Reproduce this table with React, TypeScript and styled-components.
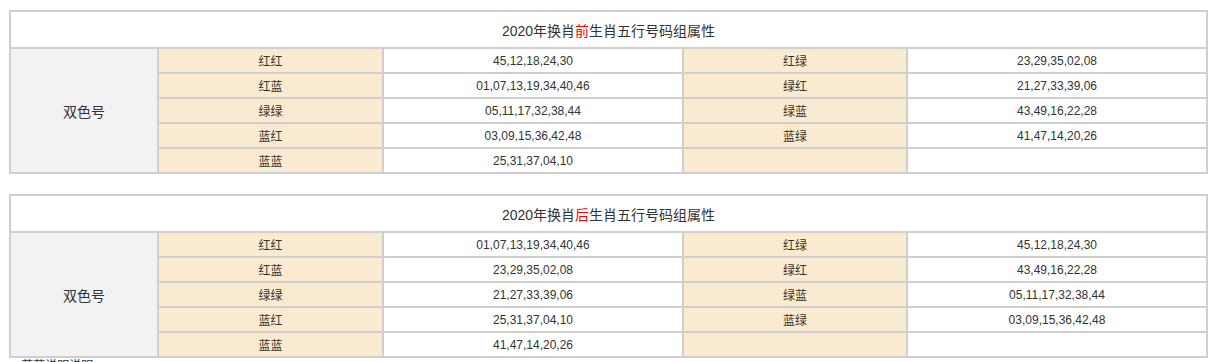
import React from 'react'
import styled, { createGlobalStyle } from 'styled-components'

const GlobalStyle = createGlobalStyle`
  body {
    margin: 0;
    background: #fff;
    color: #333;
    font-family: "Liberation Sans", "Noto Sans CJK SC", sans-serif;
  }
`

const Page = styled.div`
  padding: 10px 9px 0;
  display: flex;
  flex-direction: column;
  gap: 20px;
`

const Grid = styled.div`
  display: grid;
  grid-template-columns: 146px 223px 298px 222px 298px;
  grid-template-rows: 35px repeat(5, 23px);
  gap: 2px;
  padding: 2px;
  background: #cfcfcf;
  width: 1199px;
  box-sizing: border-box;
`

const Title = styled.div`
  grid-column: 1 / -1;
  background: #fff;
  display: flex;
  align-items: center;
  justify-content: center;
  font-size: 14px;
  color: #333;
`

const Hot = styled.span`
  color: #f00;
`

const Side = styled.div`
  grid-row: 2 / span 5;
  background: #f2f2f2;
  display: flex;
  align-items: center;
  justify-content: center;
  font-size: 14px;
  color: #333;
`

const Cell = styled.div<{ $label?: boolean }>`
  background: ${(p) => (p.$label ? '#faebd0' : '#fff')};
  display: flex;
  align-items: center;
  justify-content: center;
  font-size: 12px;
  color: #333;
`

const Note = styled.div`
  font-size: 12px;
  color: #333;
  margin: -20px 0 0 3px;
  line-height: 14px;
  padding-top: 1px;
`

type Row = [string, string, string, string]

const before: Row[] = [
  ['红红', '45,12,18,24,30', '红绿', '23,29,35,02,08'],
  ['红蓝', '01,07,13,19,34,40,46', '绿红', '21,27,33,39,06'],
  ['绿绿', '05,11,17,32,38,44', '绿蓝', '43,49,16,22,28'],
  ['蓝红', '03,09,15,36,42,48', '蓝绿', '41,47,14,20,26'],
  ['蓝蓝', '25,31,37,04,10', '', '']
]

const after: Row[] = [
  ['红红', '01,07,13,19,34,40,46', '红绿', '45,12,18,24,30'],
  ['红蓝', '23,29,35,02,08', '绿红', '43,49,16,22,28'],
  ['绿绿', '21,27,33,39,06', '绿蓝', '05,11,17,32,38,44'],
  ['蓝红', '25,31,37,04,10', '蓝绿', '03,09,15,36,42,48'],
  ['蓝蓝', '41,47,14,20,26', '', '']
]

const AttrTable = ({ mark, rows }: { mark: string; rows: Row[] }) => (
  <Grid>
    <Title>
      2020年换肖<Hot>{mark}</Hot>生肖五行号码组属性
    </Title>
    <Side>双色号</Side>
    {rows.map((r, i) => (
      <React.Fragment key={i}>
        <Cell $label>{r[0]}</Cell>
        <Cell>{r[1]}</Cell>
        <Cell $label>{r[2]}</Cell>
        <Cell>{r[3]}</Cell>
      </React.Fragment>
    ))}
  </Grid>
)

export default function App() {
  return (
    <>
      <GlobalStyle />
      <Page>
        <AttrTable mark="前" rows={before} />
        <AttrTable mark="后" rows={after} />
        <Note>↓ 蓝蓝说明说明</Note>
      </Page>
    </>
  )
}
